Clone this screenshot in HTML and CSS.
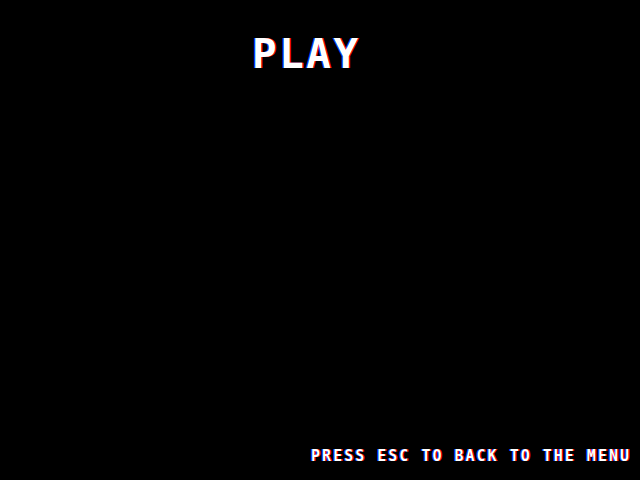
FILE: index.html
```html
<!DOCTYPE html>
<html>
<head>
<meta charset="utf-8">
<link rel="stylesheet" href="styles.css">
</head>
<body>
<div class="screen">
  <h1 class="title">PLAY</h1>
  <p class="hint">PRESS ESC TO BACK TO THE MENU</p>
</div>
</body>
</html>
```
FILE: styles.css
```css
html, body {
  margin: 0;
  padding: 0;
  background: #000;
}
.screen {
  width: 640px;
  height: 480px;
  display: flex;
  flex-direction: column;
  justify-content: space-between;
  box-sizing: border-box;
  padding: 0 9px 15px 252px;
  font-family: "DejaVu Sans Mono", "Liberation Mono", monospace;
  font-weight: bold;
  color: #fff;
}
.title {
  margin: 0;
  padding-top: 30px;
  font-size: 41px;
  line-height: 48px;
  letter-spacing: 2.5px;
  font-weight: bold;
  text-shadow: 1px 0 #ff0000, -1px 0 #0044ff;
}
.hint {
  margin: 0;
  align-self: flex-end;
  font-size: 15px;
  line-height: 18px;
  letter-spacing: 2px;
  text-shadow: 1px 0 #ff0000, -1px 0 #0044ff;
}
```
